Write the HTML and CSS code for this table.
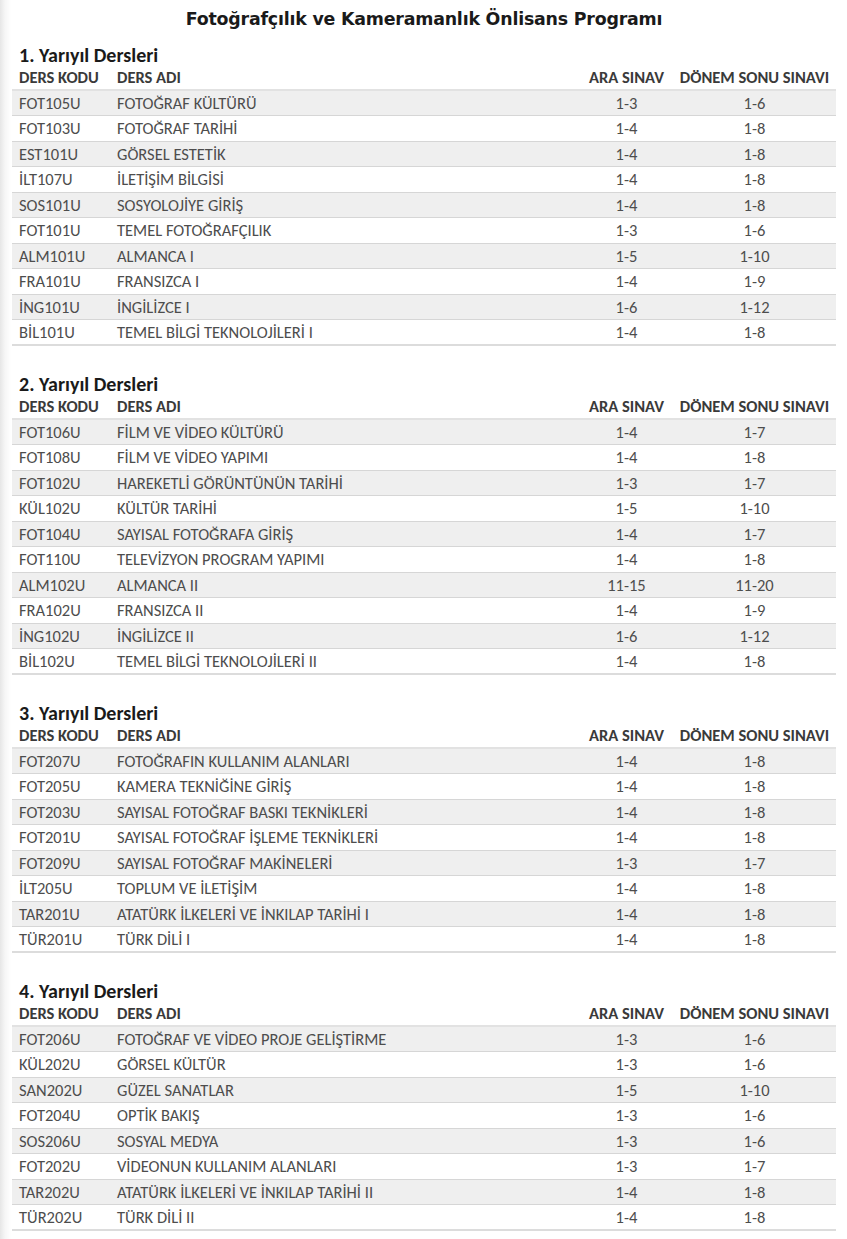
FILE: index.html
```html
<!DOCTYPE html>
<html lang="tr">
<head>
<meta charset="utf-8">
<title>Fotoğrafçılık ve Kameramanlık Önlisans Programı</title>
<link rel="stylesheet" href="styles.css">
</head>
<body>
<h1 class="page-title">Fotoğrafçılık ve Kameramanlık Önlisans Programı</h1>

<section class="term">
<h2 class="term-title">1. Yarıyıl Dersleri</h2>
<table class="courses">
<colgroup><col class="c-code"><col class="c-name"><col class="c-mid"><col class="c-final"></colgroup>
<thead><tr><th>DERS KODU</th><th>DERS ADI</th><th class="num">ARA SINAV</th><th class="num">DÖNEM SONU SINAVI</th></tr></thead>
<tbody>
<tr><td>FOT105U</td><td>FOTOĞRAF KÜLTÜRÜ</td><td class="num">1-3</td><td class="num">1-6</td></tr>
<tr><td>FOT103U</td><td>FOTOĞRAF TARİHİ</td><td class="num">1-4</td><td class="num">1-8</td></tr>
<tr><td>EST101U</td><td>GÖRSEL ESTETİK</td><td class="num">1-4</td><td class="num">1-8</td></tr>
<tr><td>İLT107U</td><td>İLETİŞİM BİLGİSİ</td><td class="num">1-4</td><td class="num">1-8</td></tr>
<tr><td>SOS101U</td><td>SOSYOLOJİYE GİRİŞ</td><td class="num">1-4</td><td class="num">1-8</td></tr>
<tr><td>FOT101U</td><td>TEMEL FOTOĞRAFÇILIK</td><td class="num">1-3</td><td class="num">1-6</td></tr>
<tr><td>ALM101U</td><td>ALMANCA I</td><td class="num">1-5</td><td class="num">1-10</td></tr>
<tr><td>FRA101U</td><td>FRANSIZCA I</td><td class="num">1-4</td><td class="num">1-9</td></tr>
<tr><td>İNG101U</td><td>İNGİLİZCE I</td><td class="num">1-6</td><td class="num">1-12</td></tr>
<tr><td>BİL101U</td><td>TEMEL BİLGİ TEKNOLOJİLERİ I</td><td class="num">1-4</td><td class="num">1-8</td></tr>
</tbody>
</table>
</section>

<section class="term">
<h2 class="term-title">2. Yarıyıl Dersleri</h2>
<table class="courses">
<colgroup><col class="c-code"><col class="c-name"><col class="c-mid"><col class="c-final"></colgroup>
<thead><tr><th>DERS KODU</th><th>DERS ADI</th><th class="num">ARA SINAV</th><th class="num">DÖNEM SONU SINAVI</th></tr></thead>
<tbody>
<tr><td>FOT106U</td><td>FİLM VE VİDEO KÜLTÜRÜ</td><td class="num">1-4</td><td class="num">1-7</td></tr>
<tr><td>FOT108U</td><td>FİLM VE VİDEO YAPIMI</td><td class="num">1-4</td><td class="num">1-8</td></tr>
<tr><td>FOT102U</td><td>HAREKETLİ GÖRÜNTÜNÜN TARİHİ</td><td class="num">1-3</td><td class="num">1-7</td></tr>
<tr><td>KÜL102U</td><td>KÜLTÜR TARİHİ</td><td class="num">1-5</td><td class="num">1-10</td></tr>
<tr><td>FOT104U</td><td>SAYISAL FOTOĞRAFA GİRİŞ</td><td class="num">1-4</td><td class="num">1-7</td></tr>
<tr><td>FOT110U</td><td>TELEVİZYON PROGRAM YAPIMI</td><td class="num">1-4</td><td class="num">1-8</td></tr>
<tr><td>ALM102U</td><td>ALMANCA II</td><td class="num">11-15</td><td class="num">11-20</td></tr>
<tr><td>FRA102U</td><td>FRANSIZCA II</td><td class="num">1-4</td><td class="num">1-9</td></tr>
<tr><td>İNG102U</td><td>İNGİLİZCE II</td><td class="num">1-6</td><td class="num">1-12</td></tr>
<tr><td>BİL102U</td><td>TEMEL BİLGİ TEKNOLOJİLERİ II</td><td class="num">1-4</td><td class="num">1-8</td></tr>
</tbody>
</table>
</section>

<section class="term">
<h2 class="term-title">3. Yarıyıl Dersleri</h2>
<table class="courses">
<colgroup><col class="c-code"><col class="c-name"><col class="c-mid"><col class="c-final"></colgroup>
<thead><tr><th>DERS KODU</th><th>DERS ADI</th><th class="num">ARA SINAV</th><th class="num">DÖNEM SONU SINAVI</th></tr></thead>
<tbody>
<tr><td>FOT207U</td><td>FOTOĞRAFIN KULLANIM ALANLARI</td><td class="num">1-4</td><td class="num">1-8</td></tr>
<tr><td>FOT205U</td><td>KAMERA TEKNİĞİNE GİRİŞ</td><td class="num">1-4</td><td class="num">1-8</td></tr>
<tr><td>FOT203U</td><td>SAYISAL FOTOĞRAF BASKI TEKNİKLERİ</td><td class="num">1-4</td><td class="num">1-8</td></tr>
<tr><td>FOT201U</td><td>SAYISAL FOTOĞRAF İŞLEME TEKNİKLERİ</td><td class="num">1-4</td><td class="num">1-8</td></tr>
<tr><td>FOT209U</td><td>SAYISAL FOTOĞRAF MAKİNELERİ</td><td class="num">1-3</td><td class="num">1-7</td></tr>
<tr><td>İLT205U</td><td>TOPLUM VE İLETİŞİM</td><td class="num">1-4</td><td class="num">1-8</td></tr>
<tr><td>TAR201U</td><td>ATATÜRK İLKELERİ VE İNKILAP TARİHİ I</td><td class="num">1-4</td><td class="num">1-8</td></tr>
<tr><td>TÜR201U</td><td>TÜRK DİLİ I</td><td class="num">1-4</td><td class="num">1-8</td></tr>
</tbody>
</table>
</section>

<section class="term">
<h2 class="term-title">4. Yarıyıl Dersleri</h2>
<table class="courses">
<colgroup><col class="c-code"><col class="c-name"><col class="c-mid"><col class="c-final"></colgroup>
<thead><tr><th>DERS KODU</th><th>DERS ADI</th><th class="num">ARA SINAV</th><th class="num">DÖNEM SONU SINAVI</th></tr></thead>
<tbody>
<tr><td>FOT206U</td><td>FOTOĞRAF VE VİDEO PROJE GELİŞTİRME</td><td class="num">1-3</td><td class="num">1-6</td></tr>
<tr><td>KÜL202U</td><td>GÖRSEL KÜLTÜR</td><td class="num">1-3</td><td class="num">1-6</td></tr>
<tr><td>SAN202U</td><td>GÜZEL SANATLAR</td><td class="num">1-5</td><td class="num">1-10</td></tr>
<tr><td>FOT204U</td><td>OPTİK BAKIŞ</td><td class="num">1-3</td><td class="num">1-6</td></tr>
<tr><td>SOS206U</td><td>SOSYAL MEDYA</td><td class="num">1-3</td><td class="num">1-6</td></tr>
<tr><td>FOT202U</td><td>VİDEONUN KULLANIM ALANLARI</td><td class="num">1-3</td><td class="num">1-7</td></tr>
<tr><td>TAR202U</td><td>ATATÜRK İLKELERİ VE İNKILAP TARİHİ II</td><td class="num">1-4</td><td class="num">1-8</td></tr>
<tr><td>TÜR202U</td><td>TÜRK DİLİ II</td><td class="num">1-4</td><td class="num">1-8</td></tr>
</tbody>
</table>
</section>
</body>
</html>
```

FILE: styles.css
```css
html, body {
  margin: 0;
  padding: 0;
}

body {
  background: linear-gradient(to right, #e6e6e6 0px, #f6f6f6 5px, #ffffff 11px);
  font-family: Carlito, Lato, "Open Sans", sans-serif;
  color: #4d4d4d;
  padding: 6px 11px 0 12px;
}

.page-title {
  margin: 0;
  height: 26px;
  line-height: 26px;
  text-align: center;
  font-family: "DejaVu Sans", sans-serif;
  font-weight: bold;
  font-size: 17.4px;
  color: #1a1a1a;
  letter-spacing: -0.2px;
}

.term {
  margin-top: 12px;
}

.term + .term {
  margin-top: 27px;
}

.term-title {
  margin: 0;
  height: 22px;
  line-height: 22px;
  padding-left: 7px;
  font-size: 20px;
  font-weight: bold;
  color: #1a1a1a;
}

.courses {
  width: 100%;
  border-collapse: collapse;
  table-layout: fixed;
  font-size: 16.5px;
}

.c-code { width: 98px; }
.c-mid { width: 93px; }
.c-final { width: 163px; }

.courses th,
.courses td {
  padding: 0 0 0 7px;
  text-align: left;
  white-space: nowrap;
  border-bottom: 1px solid #d6d6d6;
}

.courses thead tr {
  height: 24px;
}

.courses th {
  font-weight: bold;
  color: #3a3a3a;
  padding-bottom: 2px;
  border-bottom: 2px solid #e2e2e2;
}

.courses tbody tr {
  height: 25.5px;
}

.courses tbody tr:nth-child(odd) {
  background: #efefef;
}

.courses tbody tr:last-child td {
  border-bottom: 2px solid #dcdcdc;
}

.courses .num {
  text-align: center;
  padding-left: 0;
}
```
